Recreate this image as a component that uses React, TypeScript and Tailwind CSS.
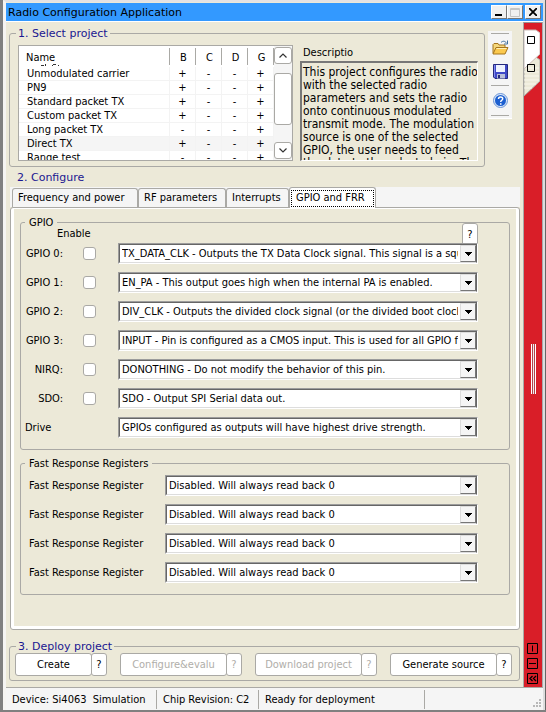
import type { ReactNode } from "react";

const projects = [
  { name: "Unmodulated carrier", marks: ["+", "-", "-", "+"] },
  { name: "PN9", marks: ["+", "-", "-", "+"] },
  { name: "Standard packet TX", marks: ["+", "-", "-", "+"] },
  { name: "Custom packet TX", marks: ["+", "-", "-", "+"] },
  { name: "Long packet TX", marks: ["-", "-", "-", "+"] },
  { name: "Direct TX", marks: ["+", "-", "-", "+"], selected: true },
  { name: "Range test", marks: ["-", "-", "-", "+"] },
];

const pins = [
  { id: "gpio0", label: "GPIO 0:", value: "TX_DATA_CLK - Outputs the TX Data Clock signal. This signal is a square wave" },
  { id: "gpio1", label: "GPIO 1:", value: "EN_PA - This output goes high when the internal PA is enabled." },
  { id: "gpio2", label: "GPIO 2:", value: "DIV_CLK - Outputs the divided clock signal (or the divided boot clock signal)" },
  { id: "gpio3", label: "GPIO 3:", value: "INPUT - Pin is configured as a CMOS input. This is used for all GPIO functions" },
  { id: "nirq", label: "NIRQ:", value: "DONOTHING - Do not modify the behavior of this pin." },
  { id: "sdo", label: "SDO:", value: "SDO - Output SPI Serial data out." },
];

function Group({ title, main, className, children }: { title: string; main?: boolean; className: string; children: ReactNode }) {
  return (
    <fieldset className={`relative min-w-0 rounded-[3px] border border-[#aaa9a5] ${className}`}>
      <legend className={main ? "ml-[6px] h-[14px] px-[2px] font-['DejaVu_Sans',sans-serif] leading-[16px] text-[#1a1791]" : "ml-1 h-[14px] px-1 leading-[16px]"}>
        {title}
      </legend>
      {children}
    </fieldset>
  );
}

function Combo({ id, value }: { id: string; value: string }) {
  return (
    <div className="relative h-[21px] min-w-0 flex-1 border border-t-[#9c9c9c] border-r-white border-b-white border-l-[#9c9c9c]">
      <select
        id={id}
        className="block h-[19px] w-full appearance-none overflow-hidden border border-t-[#666] border-r-[#666] border-b-[#ddd] border-l-[#666] bg-white pt-px pr-[18px] pl-[2px] text-[11px] leading-[16px] outline-none"
      >
        <option>{value}</option>
      </select>
      <span className="pointer-events-none absolute top-px right-px flex h-[17px] w-[16px] items-center justify-center border border-t-[#ddd] border-r-[#777] border-b-[#777] border-l-[#ddd] bg-[#f5f5f5]">
        <svg width="7" height="4" viewBox="0 0 7 4" shapeRendering="crispEdges">
          <path d="M0 0h7v1H6v1H5v1H4v1H3V3H2V2H1V1H0z" />
        </svg>
      </span>
    </div>
  );
}

function Action({ label, className, disabled }: { label: string; className: string; disabled?: boolean }) {
  const tone = disabled ? "text-[#b0aea9]" : "text-black";
  return (
    <div className={`flex h-[23px] ${className} ${tone}`}>
      <button disabled={disabled} className="min-w-0 flex-1 overflow-hidden rounded-[3px] border border-[#aaa9a5] bg-white whitespace-nowrap">
        {label}
      </button>
      <button disabled={disabled} aria-label={`Help: ${label}`} className="-ml-px w-4 rounded-[3px] border border-[#aaa9a5] bg-white">
        ?
      </button>
    </div>
  );
}

function Chevron({ up }: { up?: boolean }) {
  return (
    <svg width="8" height="5" viewBox="0 0 8 5" fill="none" stroke="#333" strokeWidth="1.2">
      <path d={up ? "M.5 4.5 4 1l3.5 3.5" : "M.5.5 4 4 7.5.5"} />
    </svg>
  );
}

function ProjectTable() {
  return (
    <div className="flex h-[116px] min-w-0 flex-1 overflow-hidden border border-[#aaa9a5] bg-white">
      <div className="relative min-w-0 flex-1 overflow-hidden">
        <table className="w-full table-fixed border-separate border-spacing-0">
          <thead>
            <tr className="h-[21px]">
              <th className="p-0 text-left font-normal">
                <span className="block h-[17px] border-r border-[#aaa9a5] pl-[7px] leading-[19px]">Name</span>
              </th>
              {["B", "C", "D", "G"].map((c) => (
                <th key={c} className="w-[26px] p-0 text-center font-normal">
                  <span className="block h-[17px] border-r border-[#aaa9a5] pl-[2px] leading-[19px]">{c}</span>
                </th>
              ))}
            </tr>
          </thead>
          <tbody>
            {projects.map((p) => (
              <tr key={p.name} className={p.selected ? "h-[14px] bg-[#f5f5f5]" : "h-[14px]"}>
                <td className="truncate border-r border-b border-[#f3f3f3] p-0 pl-2 leading-[13px]">{p.name}</td>
                {p.marks.map((m, i) => (
                  <td key={i} className="border-r border-b border-[#f3f3f3] p-0 text-center leading-[13px]">{m}</td>
                ))}
              </tr>
            ))}
          </tbody>
        </table>
        <svg className="absolute top-[18px] left-[22px]" width="18" height="2" viewBox="0 0 18 2" fill="#333" shapeRendering="crispEdges">
          <path d="M0 1h3v1H0zM4 0h1v2H4zM11 1h1v1h-1zM12 0h3v1h-3zM17 1h1v1h-1z" />
        </svg>
      </div>
      <div className="flex w-[18px] flex-col bg-[#f5f5f5] py-px">
        <button aria-label="Scroll up" className="flex h-[17px] items-center justify-center rounded-[3px] border border-[#aaa9a5] bg-white"><Chevron up /></button>
        <div className="mt-[9px] h-[52px] rounded-[3px] border border-[#aaa9a5] bg-white" />
        <button aria-label="Scroll down" className="mt-auto flex h-[17px] items-center justify-center rounded-[3px] border border-[#aaa9a5] bg-white"><Chevron /></button>
      </div>
    </div>
  );
}

function Toolbar() {
  const rule = <div className="h-px w-[18px] bg-[#aaa9a5]" />;
  return (
    <div className="flex h-[88px] w-6 flex-col items-center border-b border-white bg-[#f5f5f5] pt-[2px]">
      {rule}
      <button aria-label="Open" className="mt-[6px]">
        <svg width="17" height="15" viewBox="0 0 17 15">
          <path d="M1 13.500V4.500L2 3.500h4l1 1.500h6v3" fill="#f5d77b" stroke="#a5741f" />
          <path d="M1 14 4 7.500h12L13 14z" fill="#fbc94f" stroke="#a5741f" />
          <path d="M4.500 8.500h10" stroke="#fff0b8" />
          <path d="M9 2.500c2-2 4-1.500 5.500.5M15.500.5v3.500H12" fill="none" stroke="#41709c" />
        </svg>
      </button>
      <button aria-label="Save" className="mt-[9px]">
        <svg width="15" height="15" viewBox="0 0 15 15">
          <path d="M.5.500h14v14H2L.5 13z" fill="#3f49c8" stroke="#25297d" />
          <path d="M3 1h9v7H3z" fill="#eef2ff" />
          <path d="M4 10h8v4.500H4z" fill="#b9bfd8" />
          <path d="M5 11h2v3H5z" fill="#25297d" />
          <path d="M1 1h1v12H1z" fill="#8289ee" />
        </svg>
      </button>
      <div className="mt-[6px]">{rule}</div>
      <button aria-label="Help" className="mt-[7px]">
        <svg width="15" height="15" viewBox="0 0 15 15">
          <circle cx="7.500" cy="7.500" r="7" fill="#dbe8fb" stroke="#6d95d4" />
          <circle cx="7.500" cy="7.500" r="5.500" fill="#1c5fd0" />
          <path d="M5.500 6c0-2.600 4.200-2.600 4.200-.2 0 1.500-2 1.500-2 3.200" fill="none" stroke="#fff" strokeWidth="1.500" />
          <path d="M7 10.200h1.500v1.500H7z" fill="#fff" />
        </svg>
      </button>
      <div className="mt-[7px]">{rule}</div>
    </div>
  );
}

function SidePanel() {
  return (
    <aside className="flex w-[20px] shrink-0 flex-col items-start border-t border-r border-l border-t-[#999] border-r-[#aaa] border-l-[#aaa9a5] bg-[#d91e28]">
      <svg width="16" height="75" viewBox="0 0 16 75">
        <path d="M0 34h12l4 3v21L0 73z" fill="#ece9d8" stroke="#aaa9a5" />
        <path d="M0 45h15M0 49h15M0 53h15M0 57h15M0 61h12M0 65h8" stroke="#f8f6ec" />
        <path d="M0 7h12l4 3v21L0 46z" fill="#fff" stroke="#c9b9b5" />
        <path d="M3.500 13.500h7v7h-7z" fill="#fff" stroke="#000" />
        <path d="M3.500 41.500h7v7h-7z" fill="none" stroke="#000" />
      </svg>
      <div className="flex w-full flex-1 items-center justify-center">
        <div className="mb-1 flex h-[50px] w-[5px] justify-center border-x border-white bg-[#b5424a]">
          <div className="w-px bg-[#eee]" />
        </div>
      </div>
      <svg className="mb-px ml-[3px]" width="12" height="43" viewBox="0 0 12 43" fill="none" stroke="#000">
        <path d="M.5.500h10v10H.5zM5.500 2.500v6M.5 15.500h10v10H.5zM2 20.500h7M.5 30.500h10v10H.5z" />
        <path d="M5.500 33 3 35.500 5.500 38M9 33 6.500 35.500 9 38" strokeWidth="1.300" />
      </svg>
    </aside>
  );
}

const winButton = "flex h-[14px] w-4 items-center justify-center border border-t-white border-r-[#777] border-b-[#777] border-l-white bg-[#f0f0f0]";
const tab = "h-[19px] rounded-t-[3px] border border-b-0 border-[#aaa9a5] bg-[#f5f5f5] text-left pl-[5px]";

export default function App() {
  return (
    <div className="flex min-h-screen bg-[#808080] pb-[2px] pl-[3px] font-['DejaVu_Sans_Condensed','DejaVu_Sans',sans-serif] text-[11px] leading-[14px] text-black">
      <div className="flex min-w-0 flex-1 flex-col border-r border-r-[#666] bg-[#ece9d8]">
        <div className="flex flex-1 flex-col border-t-2 border-r-2 border-l-[3px] border-t-[#e4e2e4] border-r-[#ddd] border-l-[#f5f4f2]">
          <header className="mt-px flex h-[18px] items-center bg-[#3399ff] pr-[2px] pl-[2px]">
            <h1 className="flex-1 pt-px font-['DejaVu_Sans',sans-serif]">Radio Configuration Application</h1>
            <button aria-label="Minimize" className={winButton}>
              <svg width="8" height="8"><path d="M0 6h7v2H0z" /></svg>
            </button>
            <button aria-label="Maximize" className={winButton}>
              <svg width="10" height="9" fill="none" stroke="#c4c4c4"><path d="M.5.500h9v8h-9zM0 1.500h10" /></svg>
            </button>
            <button aria-label="Close" className={`ml-[2px] ${winButton}`}>
              <svg width="8" height="8" stroke="#000" strokeWidth="1.800"><path d="m0 0 8 8M8 0 0 8" /></svg>
            </button>
          </header>
          <div className="h-px bg-white" />

          <div className="flex flex-1 border-b border-[#aaa9a5]">
            <main className="min-w-0 flex-1 pr-[3px] pl-[3px]">
              <div className="flex gap-[3px] pt-1 pr-2">
                <Group main title="1. Select project" className="h-[141px] flex-1">
                  <div className="flex gap-[7px] pt-[5px] pr-[6px] pl-2">
                    <ProjectTable />
                    <div className="w-[178px]">
                      <label htmlFor="description" className="block h-4 pt-px pl-[3px]">Descriptio</label>
                      <textarea
                        id="description"
                        readOnly
                        className="block h-[100px] w-full resize-none overflow-hidden border-t-2 border-r border-b border-l-2 border-t-[#777] border-r-white border-b-white border-l-[#777] pt-[3px] pl-px text-[12px] leading-[13px] whitespace-pre outline-none"
                        value={"This project configures the radio\nwith the selected radio\nparameters and sets the radio\nonto continuous modulated\ntransmit mode. The modulation\nsource is one of the selected\nGPIO, the user needs to feed\nthe data to the selected pin. The"}
                      />
                    </div>
                  </div>
                </Group>
                <div className="pt-[5px]"><Toolbar /></div>
              </div>

              <h2 className="mt-1 pl-2 font-['DejaVu_Sans',sans-serif] text-[#1a1791]">2. Configure</h2>

              <div className="ml-px">
                <div role="tablist" className="mt-[2px] flex h-5 items-end bg-[#f5f5f5] pl-[2px]">
                  <button role="tab" className={`w-[126px] ${tab}`}>Frequency and power</button>
                  <button role="tab" className={`w-[88px] ${tab}`}>RF parameters</button>
                  <button role="tab" className={`w-[63px] ${tab}`}>Interrupts</button>
                  <button role="tab" aria-selected="true" className="relative z-10 -mb-px h-[21px] w-[87px] rounded-t-[3px] border border-b-0 border-[#aaa9a5] bg-white p-px">
                    <span className="block h-[17px] border border-dotted border-black pl-1 text-left leading-[14px]">GPIO and FRR</span>
                  </button>
                </div>
                <div className="rounded-[3px] border border-[#aaa9a5] bg-white px-[3px] pt-px pb-[3px]">
                  <div className="bg-[#ece9d8] px-[6px] pt-[6px] pb-[31px]">
                    <Group title="GPIO" className="h-[235px]">
                      <button aria-label="GPIO help" className="absolute -top-[6px] right-[31px] h-6 w-4 rounded-[3px] border border-[#aaa9a5] bg-white">?</button>
                      <div className="-mt-[2px] mb-[2px] pl-9">Enable</div>
                      <div className="flex flex-col gap-2 pr-[31px] pl-1">
                        {pins.map((p) => (
                          <div key={p.id} className="flex items-center">
                            <label htmlFor={p.id} className="w-[38px] text-right whitespace-nowrap">{p.label}</label>
                            <input type="checkbox" aria-label={`Enable ${p.label}`} className="mr-[22px] ml-5 h-[13px] w-[13px] appearance-none rounded-[3px] border border-[#aaa9a5] bg-white" />
                            <Combo id={p.id} value={p.value} />
                          </div>
                        ))}
                        <div className="flex items-center">
                          <label htmlFor="drive" className="w-[93px]">Drive</label>
                          <Combo id="drive" value="GPIOs configured as outputs will have highest drive strength." />
                        </div>
                      </div>
                    </Group>
                    <Group title="Fast Response Registers" className="mt-[6px] h-[139px]">
                      <div className="flex flex-col gap-2 pt-[5px] pr-[31px] pl-2">
                        {[0, 1, 2, 3].map((i) => (
                          <div key={i} className="flex items-center">
                            <label htmlFor={`frr${i}`} className="w-[136px]">Fast Response Register</label>
                            <Combo id={`frr${i}`} value="Disabled. Will always read back 0" />
                          </div>
                        ))}
                      </div>
                    </Group>
                  </div>
                </div>
              </div>

              <Group main title="3. Deploy project" className="mt-[9px] mb-[5px] h-[42px]">
                <div className="flex justify-between pr-[7px] pl-[5px]">
                  <Action label="Create" className="w-[92px]" />
                  <Action label="Configure&evalu" className="w-[122px]" disabled />
                  <Action label="Download project" className="w-[122px]" disabled />
                  <Action label="Generate source" className="w-[122px]" />
                </div>
              </Group>
            </main>
            <SidePanel />
          </div>

          <footer className="flex h-[22px] items-center bg-[#f5f5f5] whitespace-pre">
            <span className="flex h-[19px] w-[151px] items-center border-r border-[#aaa9a5] pt-px pl-[6px]">Device: Si4063  Simulation</span>
            <span className="flex h-[19px] w-[102px] items-center border-r border-[#aaa9a5] pt-px pl-[6px]">Chip Revision: C2</span>
            <span className="flex h-[19px] w-[166px] items-center border-r border-[#aaa9a5] pt-px pl-[6px]">Ready for deployment</span>
            <svg className="mr-[2px] ml-auto self-end" width="8" height="11" fill="#b8b8b8" shapeRendering="crispEdges">
              <path d="M6 0h2v2H6zM6 3h2v2H6zM3 3h2v2H3zM6 6h2v2H6zM3 6h2v2H3zM0 6h2v2H0z" />
            </svg>
          </footer>
        </div>
      </div>
    </div>
  );
}
